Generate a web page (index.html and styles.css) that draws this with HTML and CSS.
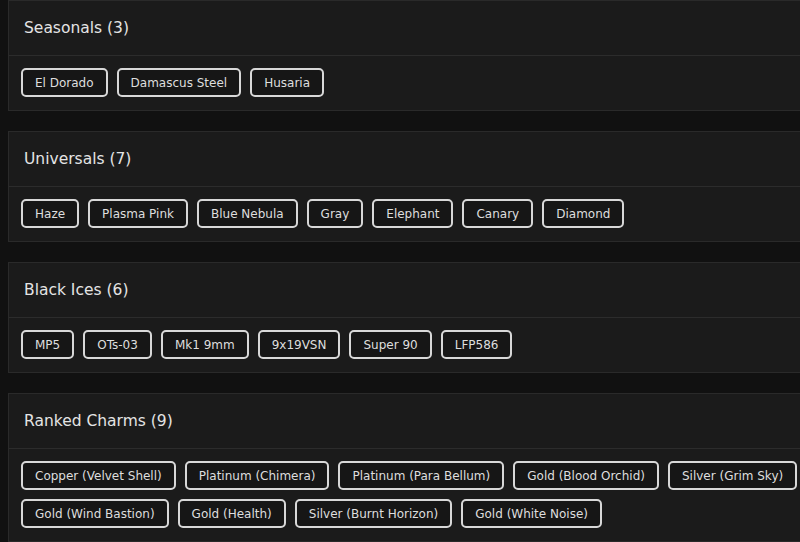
FILE: index.html
```html
<!DOCTYPE html>
<html lang="en">
<head>
    <meta charset="UTF-8">
    <meta name="viewport" content="width=device-width, initial-scale=1.0">
    <title>Collection</title>
    <link rel="stylesheet" href="styles.css">
</head>
<body>
    <div class="container">
        <!-- Seasonals -->
        <section class="card">
            <div class="card-header">Seasonals (3)</div>
            <div class="card-body">
                <span class="tag">El Dorado</span>
                <span class="tag">Damascus Steel</span>
                <span class="tag">Husaria</span>
            </div>
        </section>

        <!-- Universals -->
        <section class="card">
            <div class="card-header">Universals (7)</div>
            <div class="card-body">
                <span class="tag">Haze</span>
                <span class="tag">Plasma Pink</span>
                <span class="tag">Blue Nebula</span>
                <span class="tag">Gray</span>
                <span class="tag">Elephant</span>
                <span class="tag">Canary</span>
                <span class="tag">Diamond</span>
            </div>
        </section>

        <!-- Black Ices -->
        <section class="card">
            <div class="card-header">Black Ices (6)</div>
            <div class="card-body">
                <span class="tag">MP5</span>
                <span class="tag">OTs-03</span>
                <span class="tag">Mk1 9mm</span>
                <span class="tag">9x19VSN</span>
                <span class="tag">Super 90</span>
                <span class="tag">LFP586</span>
            </div>
        </section>

        <!-- Ranked Charms -->
        <section class="card">
            <div class="card-header">Ranked Charms (9)</div>
            <div class="card-body">
                <span class="tag">Copper (Velvet Shell)</span>
                <span class="tag">Platinum (Chimera)</span>
                <span class="tag">Platinum (Para Bellum)</span>
                <span class="tag">Gold (Blood Orchid)</span>
                <span class="tag">Silver (Grim Sky)</span>
                <span class="tag">Gold (Wind Bastion)</span>
                <span class="tag">Gold (Health)</span>
                <span class="tag">Silver (Burnt Horizon)</span>
                <span class="tag">Gold (White Noise)</span>
            </div>
        </section>
    </div>
</body>
</html>
```

FILE: styles.css
```css
body {
    font-family: 'DejaVu Sans', 'Liberation Sans', sans-serif;
    margin: 0;
    padding: 0;
    background-color: #111111;
    color: #e0e0e0;
    overflow: hidden;
}

.container {
    padding: 0 0 0 8px;
    width: 812px;
}

.card {
    background-color: #1b1b1b;
    border: 1px solid #2a2a2a;
    margin-bottom: 20px;
}

.card-header {
    height: 54px;
    display: flex;
    align-items: center;
    padding: 0 15px;
    font-size: 15.5px;
    color: #e4e4e4;
    border-bottom: 1px solid #2c2c2c;
}

.card-body {
    display: flex;
    flex-wrap: wrap;
    gap: 9px;
    padding: 12px 12px 13px 12px;
}

.tag {
    display: inline-block;
    border: 2px solid #d8d8d8;
    border-radius: 5px;
    padding: 7px 12px 6px 12px;
    font-size: 12px;
    line-height: 12px;
    color: #dedede;
    background-color: #161616;
}
```
